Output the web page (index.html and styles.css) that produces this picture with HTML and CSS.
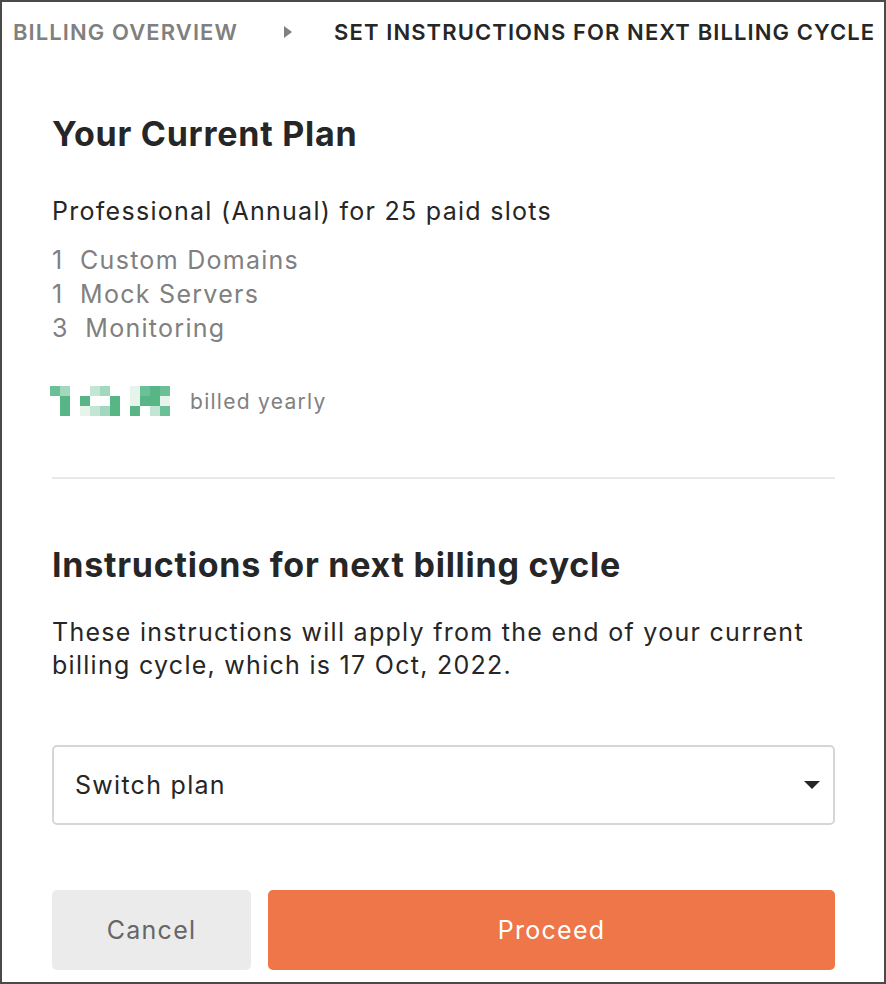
FILE: index.html
```html
<!DOCTYPE html>
<html lang="en">

<head>
    <meta charset="UTF-8">
    <meta name="viewport" content="width=device-width, initial-scale=1.0">
    <title>Set instructions for next billing cycle</title>
    <link rel="stylesheet" href="styles.css">
</head>

<body>
    <div class="frame">
        <div class="crumbs">
            <span class="crumb">Billing Overview</span>
            <span class="crumb-arrow"></span>
            <span class="crumb current">Set instructions for next billing cycle</span>
        </div>

        <div class="content">
            <h2 class="heading">Your Current Plan</h2>
            <div class="plan-name">Professional (Annual) for 25 paid slots</div>
            <ul class="addons">
                <li>1&nbsp; Custom Domains</li>
                <li>1&nbsp; Mock Servers</li>
                <li>3&nbsp; Monitoring</li>
            </ul>

            <div class="price">
                <!-- blurred amount -->
                <div class="pixels">
                    <i class="g2"></i><i class="g4"></i><i></i><i></i><i class="g5"></i><i class="g4"></i><i></i><i></i><i class="g6"></i><i class="g2"></i><i class="g1"></i><i class="g2"></i>
                    <i></i><i class="g1"></i><i></i><i class="g1"></i><i></i><i></i><i class="g1"></i><i></i><i class="g6"></i><i class="g1"></i><i class="g1"></i><i class="g6"></i>
                    <i></i><i class="g1"></i><i></i><i class="g6"></i><i class="g5"></i><i class="g4"></i><i class="g1"></i><i></i><i class="g1"></i><i></i><i class="g5"></i><i class="g2"></i>
                </div>
                <span class="billed">billed yearly</span>
            </div>

            <hr class="divider">

            <h2 class="heading">Instructions for next billing cycle</h2>
            <p class="note">These instructions will apply from the end of your current billing cycle, which is 17 Oct, 2022.</p>

            <div class="select">
                <span>Switch plan</span>
                <span class="caret"></span>
            </div>

            <div class="actions">
                <button class="btn cancel">Cancel</button>
                <button class="btn proceed">Proceed</button>
            </div>
        </div>
    </div>
</body>

</html>
```

FILE: styles.css
```css
body {
    margin: 0;
    padding: 0;
    font-family: Inter, "Noto Sans", sans-serif;
    color: #262626;
    letter-spacing: 0.08em;
}

.frame {
    box-sizing: border-box;
    height: 100vh;
    border: 2px solid #4a4a4a;
    background: white;
    overflow: hidden;
}

/* breadcrumb */
.crumbs {
    display: flex;
    align-items: center;
    height: 60px;
    padding-left: 11px;
    font-size: 22px;
    font-weight: 600;
    text-transform: uppercase;
    letter-spacing: 1.1px;
}

.crumb {
    color: #808080;
    white-space: nowrap;
}

.crumb.current {
    color: #262626;
}

.crumb-arrow {
    width: 0;
    height: 0;
    border-top: 6px solid transparent;
    border-bottom: 6px solid transparent;
    border-left: 8px solid #808080;
    margin: 0 42px 0 46px;
}

.content {
    padding: 0 49px 0 50px;
}

.heading {
    margin: 0;
    font-size: 34px;
    font-weight: 700;
    letter-spacing: 0.75px;
}

.content > .heading:first-child {
    margin-top: 51px;
}

.plan-name {
    font-size: 25px;
    line-height: 29px;
    margin-top: 43px;
}

.addons {
    list-style: none;
    margin: 17px 0 0;
    padding: 0;
    font-size: 25px;
    line-height: 34px;
    color: #808080;
}

.price {
    display: flex;
    align-items: center;
    margin-top: 41px;
}

.pixels {
    display: grid;
    grid-template-columns: repeat(12, 10px);
    grid-auto-rows: 10px;
    margin-left: -2px;
}

.pixels i {
    display: block;
}

.g1 { background: #58b585; }
.g2 { background: #6cc097; }
.g4 { background: #a2d8bd; }
.g5 { background: #c3e6d4; }
.g6 { background: #e6f4ec; }

.billed {
    font-size: 21px;
    color: #808080;
    margin-left: 20px;
}

.divider {
    border: none;
    height: 2px;
    background: #e8e8e8;
    margin: 61px 0 0;
}

.content > .divider + .heading {
    margin-top: 65px;
}

.note {
    font-size: 25px;
    line-height: 33px;
    margin: 31px 0 0;
}

.select {
    display: flex;
    align-items: center;
    justify-content: space-between;
    height: 80px;
    box-sizing: border-box;
    margin-top: 63px;
    padding: 0 13px 0 21px;
    border: 2px solid #d6d6d6;
    border-radius: 5px;
    font-size: 25px;
}

.caret {
    width: 0;
    height: 0;
    border-left: 8px solid transparent;
    border-right: 8px solid transparent;
    border-top: 8px solid #262626;
}

.actions {
    display: flex;
    gap: 17px;
    margin-top: 65px;
}

.btn {
    height: 80px;
    border: none;
    border-radius: 5px;
    font-family: inherit;
    font-size: 25px;
    letter-spacing: inherit;
    cursor: pointer;
}

.cancel {
    width: 199px;
    background: #ebebeb;
    color: #666;
}

.proceed {
    flex: 1;
    background: #ee7649;
    color: white;
}
```
